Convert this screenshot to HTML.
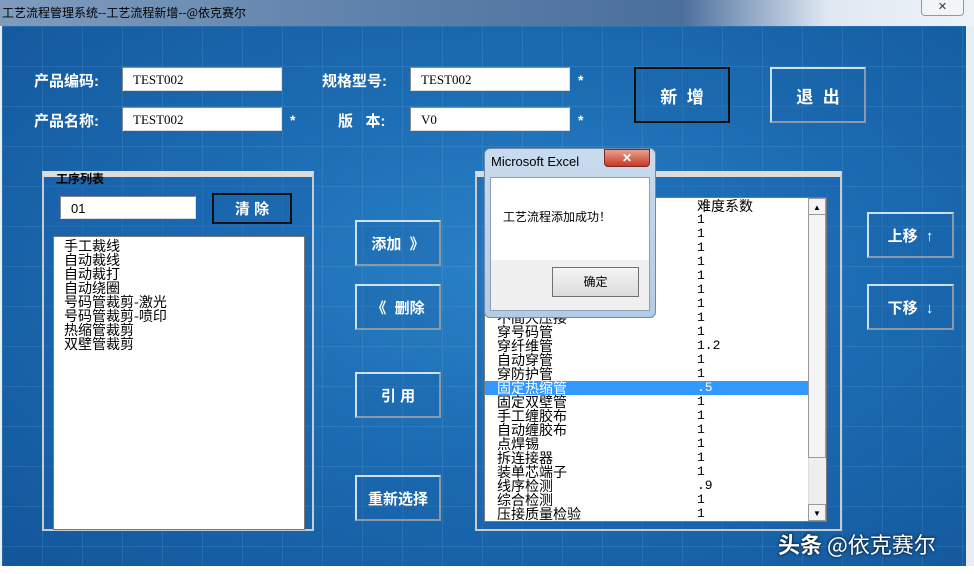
<!DOCTYPE html>
<html><head><meta charset="utf-8"><style>
*{margin:0;padding:0;box-sizing:border-box}
body{width:974px;height:574px;overflow:hidden;background:#e8eef4;position:relative;font-family:"Liberation Sans","Noto Sans CJK SC",sans-serif}
.a{position:absolute}
#title{left:0;top:0;width:974px;height:26px;background:linear-gradient(90deg,#7f9cbd 0%,#5d80aa 40%,#4b6f9c 70%,#dfe8f2 85%,#eef3f8 100%)}
#title span{position:absolute;left:2px;top:4px;font-size:12px;color:#000;font-family:"Noto Sans CJK SC",sans-serif}
#main{left:2px;top:26px;width:964px;height:540px;background:radial-gradient(ellipse at 55% 45%,#2a83c8 0%,#1c6cb3 45%,#13569a 100%)}
.grid{background-image:linear-gradient(rgba(160,210,250,.12) 1px,transparent 1px),linear-gradient(90deg,rgba(160,210,250,.12) 1px,transparent 1px);background-size:40px 40px}
.lbl{color:#fff;font-weight:bold;font-size:15px}
.tb{background:#fff;border:1px solid #888;border-right-color:#ddd;border-bottom-color:#ddd;font-family:"Liberation Serif","Noto Serif CJK SC",serif;font-size:13px;padding:4px 10px;color:#000}
.star{color:#fff;font-size:14px;font-weight:bold}
.btn{border:2px solid #cfe0ee;border-right-color:#8a9aaa;border-bottom-color:#8a9aaa;color:#fff;font-weight:bold;font-size:15px;display:flex;align-items:center;justify-content:center;background:rgba(30,100,170,.35)}
.frame{border:2px solid #c8ccd0;border-top:6px solid #dcdcdc;background:rgba(25,100,175,.4)}
.list{background:#fff;border:1px solid #777;font-family:"Noto Sans CJK SC",sans-serif;font-size:14px;line-height:14px;color:#000}
.row{height:14px;white-space:nowrap;position:relative}
.row b{position:absolute;left:212px;font-weight:normal;font-family:"Liberation Mono",monospace;font-size:13px}
</style></head><body>
<div id="title" class="a"><span>工艺流程管理系统--工艺流程新增--@依克赛尔</span>
<div class="a" style="left:921px;top:0;width:43px;height:16px;border:1px solid #8a99aa;border-top:none;border-radius:0 0 4px 4px;background:#f2f5f8;font-size:11px;text-align:center;color:#333">✕</div></div>
<div id="main" class="a"></div>
<div class="a grid" style="left:2px;top:26px;width:964px;height:540px"></div>
<div class="a" style="left:0;top:566px;width:974px;height:8px;background:#fff"></div>

<div class="a lbl" style="left:34px;top:70px">产品编码:</div>
<div class="a lbl" style="left:34px;top:110px">产品名称:</div>
<div class="a lbl" style="left:322px;top:70px">规格型号:</div>
<div class="a lbl" style="left:338px;top:110px">版&nbsp;&nbsp;&nbsp;本:</div>
<div class="a tb" style="left:122px;top:67px;width:160px;height:24px">TEST002</div>
<div class="a tb" style="left:122px;top:107px;width:160px;height:24px">TEST002</div>
<div class="a tb" style="left:410px;top:67px;width:160px;height:24px">TEST002</div>
<div class="a tb" style="left:410px;top:107px;width:160px;height:24px">V0</div>
<div class="a star" style="left:578px;top:72px">*</div>
<div class="a star" style="left:578px;top:112px">*</div>
<div class="a star" style="left:290px;top:112px">*</div>
<div class="a btn" style="left:634px;top:67px;width:96px;height:56px;border-color:#111;font-size:17px">新&nbsp;&nbsp;增</div>
<div class="a btn" style="left:770px;top:67px;width:96px;height:56px;font-size:17px">退&nbsp;&nbsp;出</div>

<div class="a frame" style="left:42px;top:171px;width:272px;height:360px"></div>
<div class="a" style="left:56px;top:170px;font-size:12px;font-weight:bold;color:#000">工序列表</div>
<div class="a tb" style="left:60px;top:196px;width:136px;height:23px;font-family:'Liberation Sans',sans-serif">01</div>
<div class="a btn" style="left:212px;top:193px;width:80px;height:31px;border-color:#111">清&nbsp;除</div>
<div class="a list" style="left:53px;top:236px;width:252px;height:294px;padding:2px 10px">
<div class="row">手工裁线</div><div class="row">自动裁线</div><div class="row">自动裁打</div><div class="row">自动绕圈</div><div class="row">号码管裁剪-激光</div><div class="row">号码管裁剪-喷印</div><div class="row">热缩管裁剪</div><div class="row">双壁管裁剪</div></div>

<div class="a btn" style="left:355px;top:220px;width:86px;height:46px">添加&nbsp;&nbsp;》</div>
<div class="a btn" style="left:355px;top:284px;width:86px;height:46px">《&nbsp;&nbsp;删除</div>
<div class="a btn" style="left:355px;top:372px;width:86px;height:46px">引&nbsp;用</div>
<div class="a btn" style="left:355px;top:475px;width:86px;height:46px">重新选择</div>

<div class="a frame" style="left:475px;top:171px;width:367px;height:360px"></div>
<div class="a list" style="left:484px;top:197px;width:343px;height:325px;padding-top:1px;overflow:hidden">
<div class="row" style="margin-left:12px"><b style="left:200px;font-family:'Noto Sans CJK SC',sans-serif;font-size:14px">难度系数</b></div>
<div class="row"><b>1</b></div><div class="row"><b>1</b></div><div class="row"><b>1</b></div><div class="row"><b>1</b></div><div class="row"><b>1</b></div><div class="row"><b>1</b></div><div class="row"><b>1</b></div>
<div class="row" style="padding-left:12px">不間大压接<b>1</b></div>
<div class="row" style="padding-left:12px">穿号码管<b>1</b></div>
<div class="row" style="padding-left:12px">穿纤维管<b>1.2</b></div>
<div class="row" style="padding-left:12px">自动穿管<b>1</b></div>
<div class="row" style="padding-left:12px">穿防护管<b>1</b></div>
<div class="row" style="padding-left:12px;background:#3399ff;color:#fff;width:324px">固定热缩管<b>.5</b></div>
<div class="row" style="padding-left:12px">固定双壁管<b>1</b></div>
<div class="row" style="padding-left:12px">手工缠胶布<b>1</b></div>
<div class="row" style="padding-left:12px">自动缠胶布<b>1</b></div>
<div class="row" style="padding-left:12px">点焊锡<b>1</b></div>
<div class="row" style="padding-left:12px">拆连接器<b>1</b></div>
<div class="row" style="padding-left:12px">装单芯端子<b>1</b></div>
<div class="row" style="padding-left:12px">线序检测<b>.9</b></div>
<div class="row" style="padding-left:12px">综合检测<b>1</b></div>
<div class="row" style="padding-left:12px">压接质量检验<b>1</b></div>
</div>
<div class="a" style="left:808px;top:198px;width:18px;height:323px;background:#eee;border-left:1px solid #ddd"></div>
<div class="a" style="left:808px;top:198px;width:18px;height:260px;background:#f4f4f4;border:1px solid #999"></div>
<div class="a" style="left:808px;top:198px;width:18px;height:17px;font-size:8px;text-align:center;line-height:17px;border:1px solid #999;background:#f4f4f4">▲</div>
<div class="a" style="left:808px;top:504px;width:18px;height:17px;font-size:8px;text-align:center;line-height:17px;border:1px solid #999;background:#f4f4f4">▼</div>

<div class="a btn" style="left:867px;top:212px;width:87px;height:46px">上移&nbsp;&nbsp;↑</div>
<div class="a btn" style="left:867px;top:284px;width:87px;height:46px">下移&nbsp;&nbsp;↓</div>

<div class="a" style="left:484px;top:148px;width:172px;height:170px;background:linear-gradient(#c9dbee,#b3cbe4);border:1px solid #6f8aa8;border-radius:6px"></div>
<div class="a" style="left:491px;top:154px;font-size:13px;color:#000">Microsoft Excel</div>
<div class="a" style="left:604px;top:149px;width:46px;height:18px;background:linear-gradient(#e8a090,#c83a25);border:1px solid #7a2a20;border-radius:0 0 4px 4px;color:#fff;font-size:12px;font-weight:bold;text-align:center;line-height:16px">✕</div>
<div class="a" style="left:490px;top:177px;width:160px;height:134px;background:#f0f0f0;border:1px solid #8aa0b8"></div>
<div class="a" style="left:491px;top:178px;width:158px;height:82px;background:#fff"></div>
<div class="a" style="left:503px;top:208px;font-size:12px;color:#000;font-family:'Noto Sans CJK SC',sans-serif">工艺流程添加成功！</div>
<div class="a" style="left:552px;top:267px;width:87px;height:30px;border:1px solid #707070;background:linear-gradient(#f4f4f4,#dcdcdc);font-size:12px;text-align:center;line-height:28px;font-family:'Noto Sans CJK SC',sans-serif">确定</div>

<div class="a" style="left:778px;top:528px;color:#fff;font-size:22px;font-weight:bold;text-shadow:0 0 3px #000;font-family:'Noto Sans CJK SC',sans-serif">头条 <span style="font-weight:normal">@依克赛尔</span></div>
</body></html>
